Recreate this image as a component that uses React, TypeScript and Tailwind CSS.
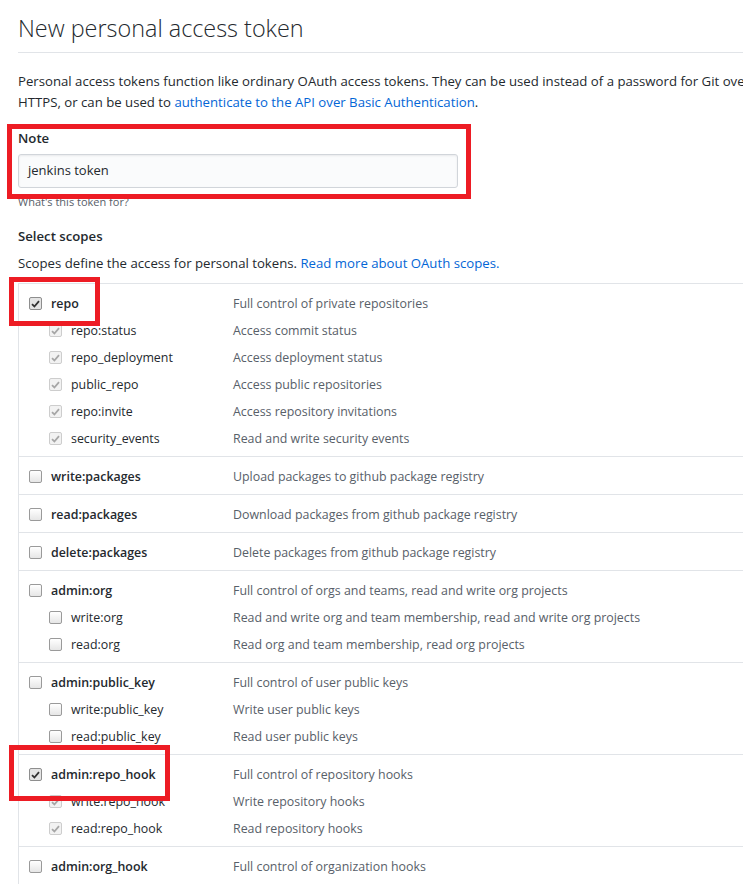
import React from "react";

type Scope = { name: string; desc: string; checked?: boolean; disabled?: boolean };
type Group = { parent: Scope; children?: Scope[] };

const groups: Group[] = [
  {
    parent: { name: "repo", desc: "Full control of private repositories", checked: true },
    children: [
      { name: "repo:status", desc: "Access commit status", checked: true, disabled: true },
      { name: "repo_deployment", desc: "Access deployment status", checked: true, disabled: true },
      { name: "public_repo", desc: "Access public repositories", checked: true, disabled: true },
      { name: "repo:invite", desc: "Access repository invitations", checked: true, disabled: true },
      { name: "security_events", desc: "Read and write security events", checked: true, disabled: true },
    ],
  },
  { parent: { name: "write:packages", desc: "Upload packages to github package registry" } },
  { parent: { name: "read:packages", desc: "Download packages from github package registry" } },
  { parent: { name: "delete:packages", desc: "Delete packages from github package registry" } },
  {
    parent: { name: "admin:org", desc: "Full control of orgs and teams, read and write org projects" },
    children: [
      { name: "write:org", desc: "Read and write org and team membership, read and write org projects" },
      { name: "read:org", desc: "Read org and team membership, read org projects" },
    ],
  },
  {
    parent: { name: "admin:public_key", desc: "Full control of user public keys" },
    children: [
      { name: "write:public_key", desc: "Write user public keys" },
      { name: "read:public_key", desc: "Read user public keys" },
    ],
  },
  {
    parent: { name: "admin:repo_hook", desc: "Full control of repository hooks", checked: true },
    children: [
      { name: "write:repo_hook", desc: "Write repository hooks", checked: true, disabled: true },
      { name: "read:repo_hook", desc: "Read repository hooks", checked: true, disabled: true },
    ],
  },
  { parent: { name: "admin:org_hook", desc: "Full control of organization hooks" } },
];

function Checkbox({ checked, disabled }: { checked?: boolean; disabled?: boolean }) {
  if (!checked) {
    return (
      <span className="block h-[13px] w-[13px] shrink-0 rounded-[2px] border border-[#9a9a9a] bg-gradient-to-b from-[#ffffff] to-[#e6e6e6]" />
    );
  }
  return (
    <span
      className={
        disabled
          ? "flex h-[13px] w-[13px] shrink-0 items-center justify-center rounded-[2px] border border-[#cdcdcd] bg-[#f2f2f2]"
          : "flex h-[13px] w-[13px] shrink-0 items-center justify-center rounded-[2px] border border-[#8e8e8e] bg-[#e4e4e4]"
      }
    >
      <svg width="9" height="8" viewBox="0 0 9 8">
        <path
          d="M1 4.2 L3.4 6.5 L8 1.2"
          fill="none"
          stroke={disabled ? "#a6a6a6" : "#333333"}
          strokeWidth="1.8"
        />
      </svg>
    </span>
  );
}

function ScopeRow({ scope, child }: { scope: Scope; child?: boolean }) {
  return (
    <div className={child ? "mt-[7px] flex h-[20px] items-center" : "flex h-[20px] items-center"}>
      <div className={child ? "flex w-[214px] shrink-0 items-center pl-[30px]" : "flex w-[214px] shrink-0 items-center pl-[10px]"}>
        <Checkbox checked={scope.checked} disabled={scope.disabled} />
        <span className={child ? "ml-[9px] text-[#24292e]" : "ml-[9px] font-semibold text-[#24292e]"}>
          {scope.name}
        </span>
      </div>
      <span className="whitespace-nowrap text-[#586069]">{scope.desc}</span>
    </div>
  );
}

export default function App() {
  return (
    <div className="relative h-[884px] w-[743px] overflow-hidden bg-white font-['Open_Sans',sans-serif] text-[13.2px] text-[#24292e]">
      <div className="w-[800px] pl-[18px]">
        {/* Heading */}
        <div className="border-b border-[#e1e4e8] pt-[10px] pb-[6px]">
          <h1 className="text-[23.4px] font-light leading-[36px] text-[#24292e]">New personal access token</h1>
        </div>

        <p className="mt-[18px] leading-[21px] whitespace-nowrap">
          Personal access tokens function like ordinary OAuth access tokens. They can be used instead of a password for Git over
          <br />
          HTTPS, or can be used to{" "}
          <a className="text-[#0366d6]">authenticate to the API over Basic Authentication</a>.
        </p>

        {/* Note */}
        <div className="mt-[15px] font-semibold leading-[20px]">Note</div>
        <div className="mt-[6px] flex h-[34px] w-[440px] items-center rounded-[3px] border border-[#d1d5da] bg-[#fafbfc] px-[9px] text-[13px] shadow-[inset_0_1px_2px_rgba(27,31,35,0.075)]">
          jenkins token
        </div>
        <div className="mt-[6px] text-[11px] leading-[16px] text-[#586069]">What's this token for?</div>

        {/* Scopes */}
        <div className="mt-[16px] font-semibold leading-[20px]">Select scopes</div>
        <p className="mt-[7px] leading-[20px]">
          Scopes define the access for personal tokens.{" "}
          <a className="text-[#0366d6]">Read more about OAuth scopes.</a>
        </p>

        <div className="mt-[10px] border-t border-l border-[#e1e4e8] text-[12.4px]">
          {groups.map((g) => (
            <div key={g.parent.name} className="border-b border-[#e1e4e8] pt-[10px] pb-[7px]">
              <ScopeRow scope={g.parent} />
              {g.children?.map((c) => (
                <ScopeRow key={c.name} scope={c} child />
              ))}
            </div>
          ))}
        </div>
      </div>

      {/* Red highlight boxes */}
      <div className="pointer-events-none absolute left-[7px] top-[124px] h-[75px] w-[464px] border-[5px] border-[#ed1c24]" />
      <div className="pointer-events-none absolute left-[9px] top-[277px] h-[49px] w-[91px] border-[5px] border-[#ed1c24]" />
      <div className="pointer-events-none absolute left-[9px] top-[745px] h-[56px] w-[161px] border-[5px] border-[#ed1c24]" />
    </div>
  );
}
